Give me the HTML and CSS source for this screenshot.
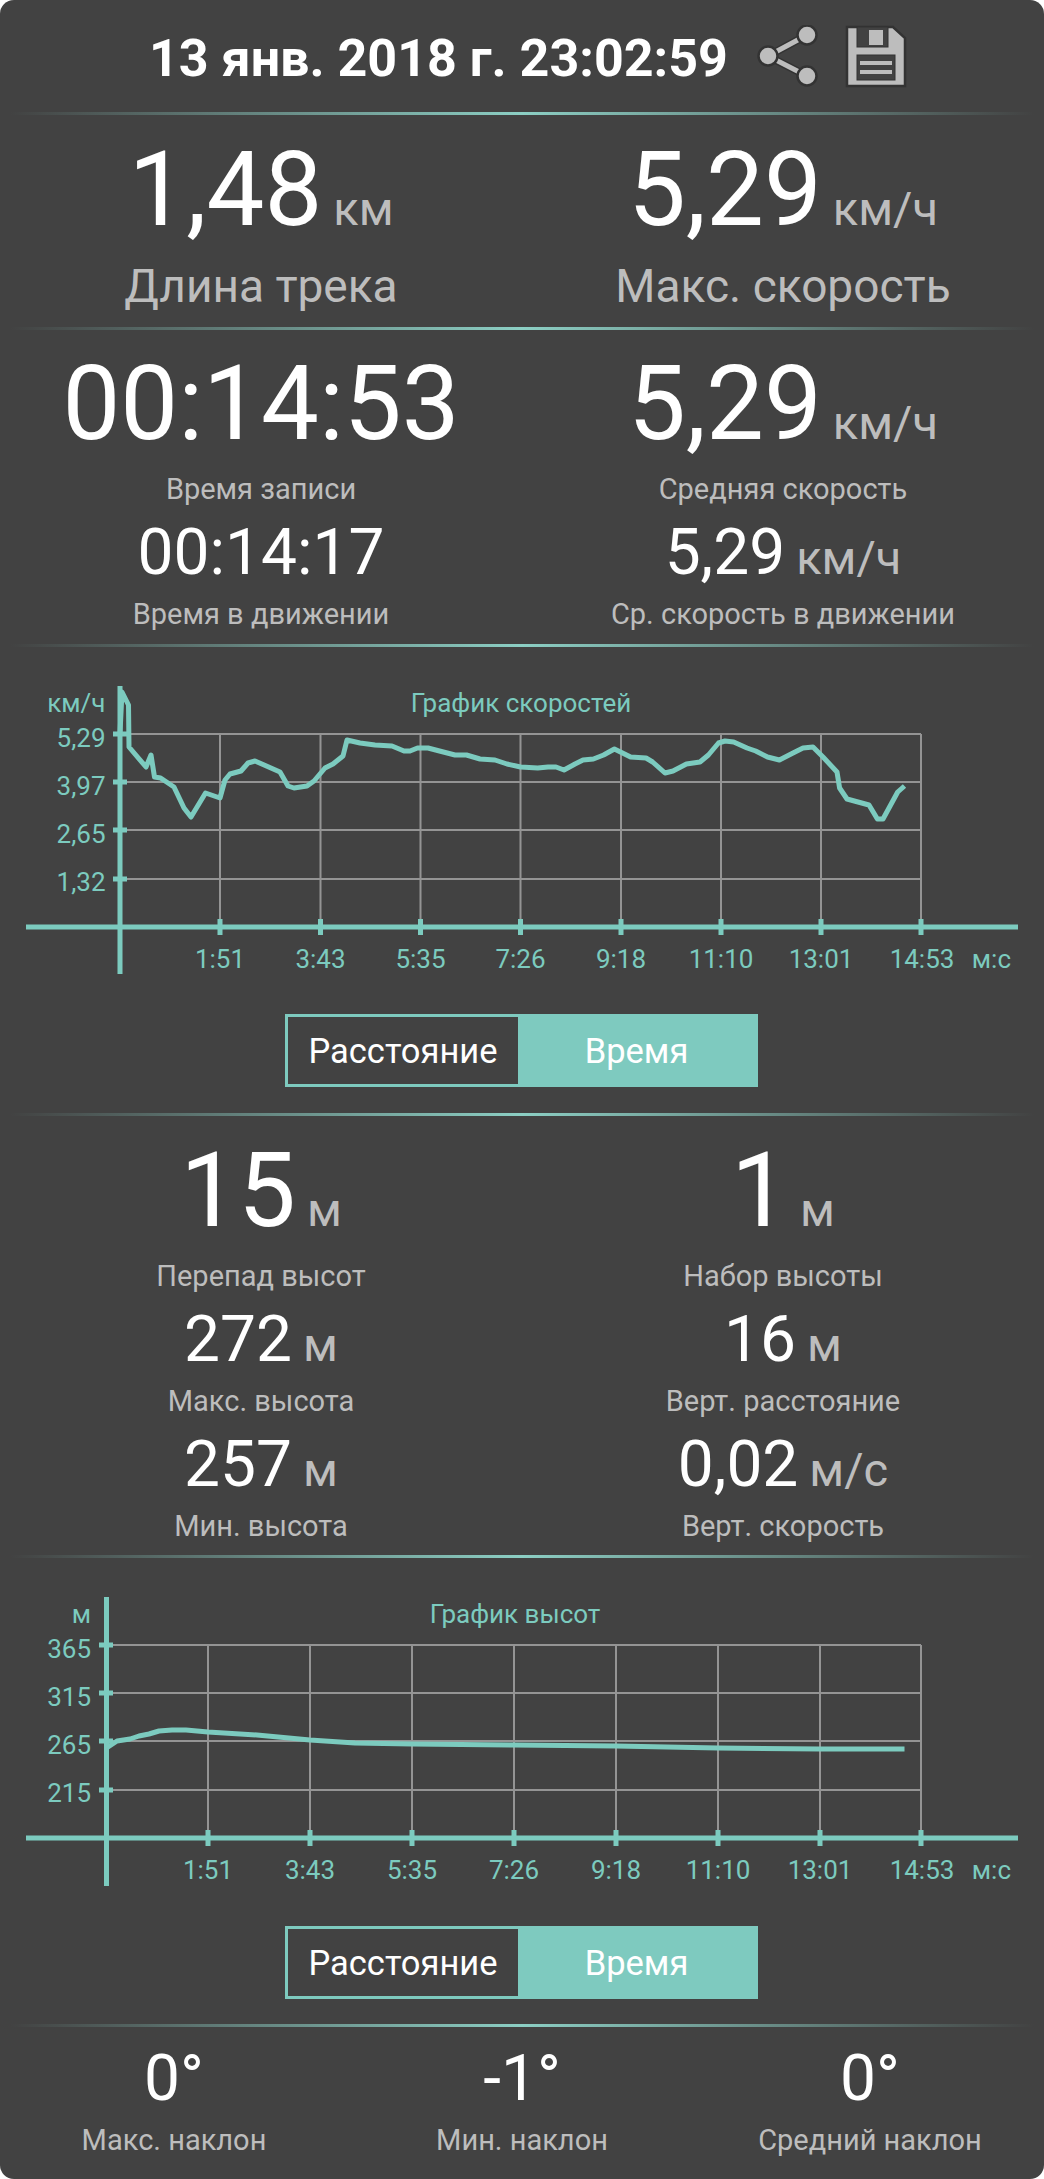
FILE: index.html
```html
<!DOCTYPE html>
<html lang="ru">
  <head>
    <meta charset="UTF-8" />
    <title>Трек</title>
    <link rel="stylesheet" href="styles.css">
  </head>
  <body>
    <!-- Header -->
    <header class="header">
      <span class="date">13 янв. 2018 г. 23:02:59</span>
      <svg class="icon-share" viewBox="0 0 62 62" width="62" height="62">
        <path class="share-edge" d="M50 10 L11 31 L50 51" />
        <path class="share-line" d="M50 10 L11 31 L50 51" />
        <circle class="icon-shape" cx="50" cy="10" r="9.5" />
        <circle class="icon-shape" cx="11" cy="31" r="9.5" />
        <circle class="icon-shape" cx="50" cy="51" r="9.5" />
      </svg>
      <svg class="icon-save" viewBox="0 0 62 64" width="62" height="64">
        <path class="icon-shape" d="M2 3 H48 L60 14 V62 H2 Z" />
        <rect class="icon-hole" x="12" y="3" width="31" height="20" />
        <rect class="icon-stripe" x="24" y="6" width="14" height="15" />
        <rect class="icon-hole" x="12" y="31" width="38" height="25" />
        <rect class="icon-stripe" x="15" y="37" width="32" height="4" />
        <rect class="icon-stripe" x="15" y="46" width="32" height="4" />
      </svg>
    </header>
    <div class="divider"></div>

    <!-- Track length and top speed -->
    <section class="stats stats-top">
      <div class="stat">
        <div class="val val-lg">1,48<span class="unit">км</span></div>
        <div class="lbl lbl-lg">Длина трека</div>
      </div>
      <div class="stat">
        <div class="val val-lg">5,29<span class="unit">км/ч</span></div>
        <div class="lbl lbl-lg">Макс. скорость</div>
      </div>
    </section>
    <div class="divider"></div>

    <!-- Time and average speed -->
    <section class="stats stats-time">
      <div class="stat">
        <div class="val val-lg">00:14:53</div>
        <div class="lbl">Время записи</div>
        <div class="val val-md">00:14:17</div>
        <div class="lbl">Время в движении</div>
      </div>
      <div class="stat">
        <div class="val val-lg">5,29<span class="unit">км/ч</span></div>
        <div class="lbl">Средняя скорость</div>
        <div class="val val-md">5,29<span class="unit">км/ч</span></div>
        <div class="lbl">Ср. скорость в движении</div>
      </div>
    </section>
    <div class="divider"></div>

    <!-- Speed chart -->
    <section class="chart chart-speed">
      <svg class="plot" viewBox="0 680 1044 300" width="1044" height="300">
        <g class="grid">
          <path d="M120 734 H921 M120 782 H921 M120 830 H921 M120 879 H921" />
          <path d="M220 734 V927 M320.5 734 V927 M420.5 734 V927 M520.5 734 V927 M621 734 V927 M721 734 V927 M821 734 V927 M921 734 V927" />
        </g>
        <g class="axis">
          <path d="M26 927 H1018 M120 686 V974" />
        </g>
        <g class="ticks">
          <path d="M113 734 H127 M113 782 H127 M113 830 H127 M113 879 H127" />
          <path d="M220 919 V935 M320.5 919 V935 M420.5 919 V935 M520.5 919 V935 M621 919 V935 M721 919 V935 M821 919 V935 M921 919 V935" />
        </g>
        <polyline class="line" points="120,733 122,692 128.5,705 129,747 146,767 151,755 154.5,777 160.6,778 174,787 184,808 191,817 205.5,793 220,798 225,780 230,774 241,771 248,763 255,761 280,772 288,786 294,788 307,786 314,781 325,768 333,764 343,756 347,740 360,743 375,745 392,746 404,751 410,751 417.5,748 428,748 439.5,751 455,755 466.5,755 480,759 495,760 507,764 520.6,767 537.7,768 548,767 556,767 564,770 575,764 583,760 593.4,759 603.6,755 614.4,749 630.6,757 646,758 652.6,762 665,773 673,771 686.4,764 700,762 708.4,755 718.5,743 725,741 733.7,742 747,748 755.7,751 767.5,757 779.4,760 793,753 803,748 813,747 823,757 837,772 839.6,788 847,799 869,805 877.4,819 883,819 897.7,792 904.5,786" />
        <g class="labels">
          <text class="end" x="105.5" y="712">км/ч</text>
          <text class="end" x="105.5" y="747">5,29</text>
          <text class="end" x="105.5" y="795">3,97</text>
          <text class="end" x="105.5" y="843">2,65</text>
          <text class="end" x="105.5" y="891">1,32</text>
          <text class="mid" x="521" y="712">График скоростей</text>
          <text class="mid" x="220" y="968">1:51</text>
          <text class="mid" x="320.5" y="968">3:43</text>
          <text class="mid" x="420.5" y="968">5:35</text>
          <text class="mid" x="520.5" y="968">7:26</text>
          <text class="mid" x="621" y="968">9:18</text>
          <text class="mid" x="721" y="968">11:10</text>
          <text class="mid" x="821" y="968">13:01</text>
          <text class="mid" x="922" y="968">14:53</text>
          <text class="end" x="1011" y="968">м:с</text>
        </g>
      </svg>
      <div class="toggle">
        <div class="toggle-off">Расстояние</div>
        <div class="toggle-on">Время</div>
      </div>
    </section>
    <div class="divider"></div>

    <!-- Altitude stats -->
    <section class="stats stats-alt">
      <div class="stat">
        <div class="val val-lg">15<span class="unit">м</span></div>
        <div class="lbl">Перепад высот</div>
        <div class="val val-md">272<span class="unit">м</span></div>
        <div class="lbl">Макс. высота</div>
        <div class="val val-md">257<span class="unit">м</span></div>
        <div class="lbl">Мин. высота</div>
      </div>
      <div class="stat">
        <div class="val val-lg">1<span class="unit">м</span></div>
        <div class="lbl">Набор высоты</div>
        <div class="val val-md">16<span class="unit">м</span></div>
        <div class="lbl">Верт. расстояние</div>
        <div class="val val-md">0,02<span class="unit">м/с</span></div>
        <div class="lbl">Верт. скорость</div>
      </div>
    </section>
    <div class="divider"></div>

    <!-- Altitude chart -->
    <section class="chart chart-alt">
      <svg class="plot" viewBox="0 1590 1044 300" width="1044" height="300">
        <g class="grid">
          <path d="M106 1645 H921 M106 1693 H921 M106 1741 H921 M106 1790 H921" />
          <path d="M208 1645 V1838 M310 1645 V1838 M412 1645 V1838 M514 1645 V1838 M616 1645 V1838 M718 1645 V1838 M820 1645 V1838 M921 1645 V1838" />
        </g>
        <g class="axis">
          <path d="M26 1838 H1018 M106.5 1597 V1886" />
        </g>
        <g class="ticks">
          <path d="M99 1645 H113 M99 1693 H113 M99 1741 H113 M99 1790 H113" />
          <path d="M208 1830 V1846 M310 1830 V1846 M412 1830 V1846 M514 1830 V1846 M616 1830 V1846 M718 1830 V1846 M820 1830 V1846 M921 1830 V1846" />
        </g>
        <polyline class="line" points="106.5,1748 117,1741 130,1739 139,1736 149,1734 159,1731 172,1730 186,1730 208,1732 257,1735 310,1740 355,1743 412,1744 514,1745 616,1746 718,1748 820,1749 904.5,1749" />
        <g class="labels">
          <text class="end" x="91" y="1623">м</text>
          <text class="end" x="91" y="1658">365</text>
          <text class="end" x="91" y="1706">315</text>
          <text class="end" x="91" y="1754">265</text>
          <text class="end" x="91" y="1802">215</text>
          <text class="mid" x="515" y="1623">График высот</text>
          <text class="mid" x="208" y="1879">1:51</text>
          <text class="mid" x="310" y="1879">3:43</text>
          <text class="mid" x="412" y="1879">5:35</text>
          <text class="mid" x="514" y="1879">7:26</text>
          <text class="mid" x="616" y="1879">9:18</text>
          <text class="mid" x="718" y="1879">11:10</text>
          <text class="mid" x="820" y="1879">13:01</text>
          <text class="mid" x="922" y="1879">14:53</text>
          <text class="end" x="1011" y="1879">м:с</text>
        </g>
      </svg>
      <div class="toggle toggle-alt">
        <div class="toggle-off">Расстояние</div>
        <div class="toggle-on">Время</div>
      </div>
    </section>
    <div class="divider"></div>

    <!-- Slope -->
    <section class="stats stats-slope">
      <div class="stat">
        <div class="val val-md">0°</div>
        <div class="lbl">Макс. наклон</div>
      </div>
      <div class="stat">
        <div class="val val-md">-1°</div>
        <div class="lbl">Мин. наклон</div>
      </div>
      <div class="stat">
        <div class="val val-md">0°</div>
        <div class="lbl">Средний наклон</div>
      </div>
    </section>
  </body>
</html>
```

FILE: styles.css
```css
/* Reset */
* {
  margin: 0;
  padding: 0;
  box-sizing: border-box;
}

html {
  background-color: #fff;
}

body {
  width: 1044px;
  height: 2179px;
  overflow: hidden;
  border-radius: 14px;
  background-color: #424242;
  font-family: Roboto, "Liberation Sans", sans-serif;
  color: #fff;
}

/* Header */
.header {
  height: 112px;
  padding: 4px 0 0 149px;
  display: flex;
  align-items: center;
}

.date {
  font-size: 52px;
  font-weight: 700;
  margin-right: 29px;
}

.icon-share,
.icon-save {
  margin-bottom: 4px;
}

.icon-save {
  margin-left: 26px;
}

.icon-shape {
  fill: #bdbdbd;
  stroke: #333;
  stroke-width: 2.5;
}

.icon-hole {
  fill: #424242;
  stroke: #333;
  stroke-width: 1;
}

.icon-stripe {
  fill: #bdbdbd;
}

.share-edge {
  fill: none;
  stroke: #333;
  stroke-width: 8;
}

.share-line {
  fill: none;
  stroke: #bdbdbd;
  stroke-width: 5;
}

/* Divider with faded ends */
.divider {
  height: 3px;
  margin: 0 10px;
  background: linear-gradient(to right, #424242, #8ccfc4 50%, #424242);
}

/* Stat blocks */
.stats {
  display: grid;
  grid-template-columns: 1fr 1fr;
  text-align: center;
}

.stats-top {
  padding-top: 20px;
  height: 212px;
}

.stats-time {
  padding-top: 19px;
  height: 314px;
}

.stats-alt {
  padding-top: 20px;
  height: 439px;
}

.stats-slope {
  grid-template-columns: 1fr 1fr 1fr;
  padding-top: 5px;
}

.val {
  white-space: nowrap;
}

.val-lg {
  font-size: 103px;
  line-height: 110px;
}

.val-md {
  font-size: 64px;
  line-height: 72px;
  margin-top: 11px;
}

.unit {
  font-size: 47px;
  line-height: 1;
  color: #bdbdbd;
  margin-left: 11px;
}

.lbl {
  font-size: 29px;
  line-height: 34px;
  color: #bdbdbd;
  margin-top: 8px;
}

.val-lg + .lbl {
  margin-top: 13px;
}

.lbl-lg {
  font-size: 46px;
  line-height: 56px;
}

/* Charts */
.chart {
  height: 466px;
  padding-top: 33px;
}

.chart-alt {
  padding-top: 32px;
}

.plot {
  display: block;
}

.grid path {
  fill: none;
  stroke: #949494;
  stroke-width: 2;
}

.axis path,
.ticks path {
  fill: none;
  stroke: #7ccbbf;
  stroke-width: 5;
}

.line {
  fill: none;
  stroke: #7ccbbf;
  stroke-width: 5;
  stroke-linejoin: round;
}

.labels text {
  font-size: 26px;
  fill: #7ccbbf;
}

.labels .end {
  text-anchor: end;
}

.labels .mid {
  text-anchor: middle;
}

/* Distance / time switch */
.toggle {
  width: 473px;
  height: 73px;
  margin: 34px 0 0 285px;
  display: flex;
  border: 3px solid #7ecabf;
  font-size: 34.5px;
}

.toggle-alt {
  margin-top: 36px;
}

.toggle-off,
.toggle-on {
  display: flex;
  align-items: center;
  justify-content: center;
}

.toggle-off {
  width: 230px;
}

.toggle-on {
  flex: 1;
  background-color: #7ecabf;
}
```
